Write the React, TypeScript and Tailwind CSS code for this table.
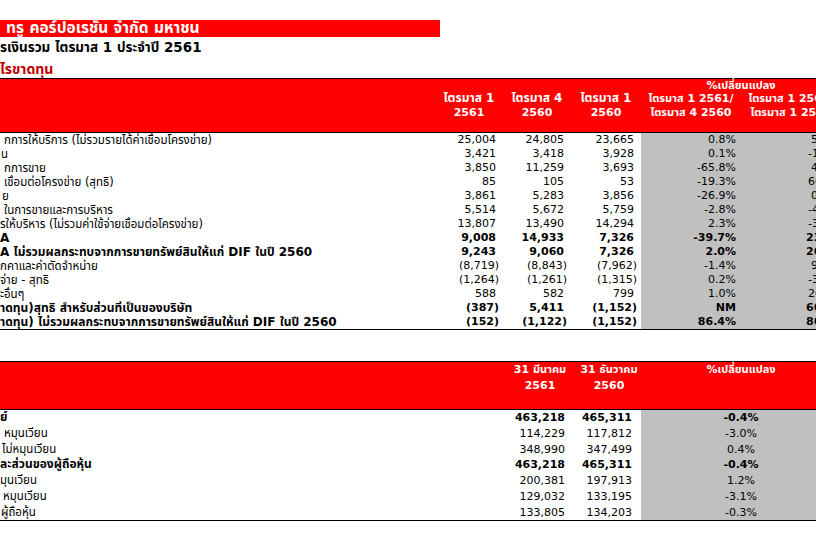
import React from "react";

type Row = {
  label: string;
  pl?: number;
  bold?: boolean;
  v: string[];
  p: string;
  q: string;
  qpl: number;
};

const incomeRows: Row[] = [
  { label: "กการให้บริการ (ไม่รวมรายได้ค่าเชื่อมโครงข่าย)", pl: 4, v: ["25,004", "24,805", "23,665"], p: "0.8%", q: "5.7%", qpl: 70 },
  { label: "น", pl: 1, v: ["3,421", "3,418", "3,928"], p: "0.1%", q: "-12.9%", qpl: 67 },
  { label: "กการขาย", pl: 4, v: ["3,850", "11,259", "3,693"], p: "-65.8%", q: "4.2%", qpl: 70 },
  { label: "เชื่อมต่อโครงข่าย (สุทธิ)", pl: 4, v: ["85", "105", "53"], p: "-19.3%", q: "60.4%", qpl: 67 },
  { label: "ย", pl: 2, v: ["3,861", "5,283", "3,856"], p: "-26.9%", q: "0.1%", qpl: 70 },
  { label: "ในการขายและการบริหาร", pl: 4, v: ["5,514", "5,672", "5,759"], p: "-2.8%", q: "-4.3%", qpl: 67 },
  { label: "รให้บริหาร (ไม่รวมค่าใช้จ่ายเชื่อมต่อโครงข่าย)", v: ["13,807", "13,490", "14,294"], p: "2.3%", q: "-3.4%", qpl: 67 },
  { label: "A", bold: true, v: ["9,008", "14,933", "7,326"], p: "-39.7%", q: "23.0%", qpl: 65 },
  { label: "A ไม่รวมผลกระทบจากการขายทรัพย์สินให้แก่ DIF ในปี 2560", bold: true, v: ["9,243", "9,060", "7,326"], p: "2.0%", q: "26.2%", qpl: 65 },
  { label: "กคาและค่าตัดจำหน่าย", v: ["(8,719)", "(8,843)", "(7,962)"], p: "-1.4%", q: "9.5%", qpl: 70 },
  { label: "จ่าย - สุทธิ", v: ["(1,264)", "(1,261)", "(1,315)"], p: "0.2%", q: "-3.9%", qpl: 67 },
  { label: "ะอื่นๆ", v: ["588", "582", "799"], p: "1.0%", q: "26.4%", qpl: 67 },
  { label: "าดทุน)สุทธิ สำหรับส่วนที่เป็นของบริษัท", bold: true, v: ["(387)", "5,411", "(1,152)"], p: "NM", q: "66.4%", qpl: 65 },
  { label: "าดทุน) ไม่รวมผลกระทบจากการขายทรัพย์สินให้แก่ DIF ในปี 2560", bold: true, v: ["(152)", "(1,122)", "(1,152)"], p: "86.4%", q: "86.8%", qpl: 65 },
];

const balanceRows = [
  { label: "ย์", pl: 0, bold: true, v: ["463,218", "465,311"], p: "-0.4%" },
  { label: "หมุนเวียน", pl: 4, v: ["114,229", "117,812"], p: "-3.0%" },
  { label: "ไม่หมุนเวียน", pl: 2, v: ["348,990", "347,499"], p: "0.4%" },
  { label: "ละส่วนของผู้ถือหุ้น", pl: 0, bold: true, v: ["463,218", "465,311"], p: "-0.4%" },
  { label: "มุนเวียน", pl: 0, v: ["200,381", "197,913"], p: "1.2%" },
  { label: "หมุนเวียน", pl: 3, v: ["129,032", "133,195"], p: "-3.1%" },
  { label: "ผู้ถือหุ้น", pl: 1, v: ["133,805", "134,203"], p: "-0.3%" },
];

function Num({ value }: { value: string }) {
  const paren = value.startsWith("(");
  return <div className={paren ? "text-right pr-[4px]" : "text-right pr-[7px]"}>{value}</div>;
}

export default function App() {
  return (
    <div className="w-[816px] h-[544px] overflow-hidden bg-white text-black text-[11px] [font-family:Tahoma,'DejaVu_Sans','Noto_Sans_Thai',sans-serif]">
      <div className="w-[1000px] pt-[20px]">
        <div className="w-[440px] h-[17px] bg-[#ff0000] text-white font-bold text-[15.5px] leading-[17px] pl-[6px] whitespace-nowrap">
          ทรู คอร์ปอเรชั่น จำกัด มหาชน
        </div>
        <div className="h-[19px] pt-[2px] font-bold text-[13.5px] leading-[17px] whitespace-nowrap">
          รเงินรวม ไตรมาส 1 ประจำปี 2561
        </div>
        <div className="h-[22px] pt-[5px] font-bold text-[14px] leading-[16px] text-[#c00000] whitespace-nowrap">
          ไรขาดทุน
        </div>

        {/* income statement */}
        <div className="border-t border-b border-black bg-[#ff0000] text-white font-bold h-[55px]">
          <div className="grid grid-cols-[435px_68px_68px_70px_100px_100px] h-[13px] leading-[13px]">
            <div className="col-start-5 col-span-2 text-center">%เปลี่ยนแปลง</div>
          </div>
          <div className="grid grid-cols-[435px_68px_68px_70px_100px_100px] leading-[13.5px] text-center">
            <div />
            <div className="text-[12px]">ไตรมาส 1<br /><span className="text-[11px]">2561</span></div>
            <div className="text-[12px]">ไตรมาส 4<br /><span className="text-[11px]">2560</span></div>
            <div className="text-[12px]">ไตรมาส 1<br /><span className="text-[11px]">2560</span></div>
            <div>ไตรมาส 1 2561/<br />ไตรมาส 4 2560</div>
            <div>ไตรมาส 1 2561/<br />ไตรมาส 1 2560</div>
          </div>
        </div>
        <div className="border-b border-black">
          {incomeRows.map((r) => (
            <div
              key={r.label}
              className={`grid grid-cols-[435px_68px_68px_70px_100px_100px] h-[14px] leading-[14px] ${r.bold ? "font-bold" : ""}`}
            >
              <div
                className={`whitespace-nowrap overflow-hidden ${r.bold ? "text-[12px]" : "text-[11.5px]"}`}
                style={{ paddingLeft: r.pl ?? 0 }}
              >
                {r.label}
              </div>
              {r.v.map((x, i) => (
                <Num key={i} value={x} />
              ))}
              <div className="bg-[#c0c0c0] text-right pr-[5px]">{r.p}</div>
              <div className="bg-[#c0c0c0] whitespace-nowrap" style={{ paddingLeft: r.qpl }}>{r.q}</div>
            </div>
          ))}
        </div>

        {/* balance sheet */}
        <div className="mt-[31px] border-t border-b border-black bg-[#ff0000] text-white font-bold h-[49px]">
          <div className="grid grid-cols-[503px_68px_70px_200px] leading-[16px] text-center">
            <div />
            <div className="pl-[6px]">31 มีนาคม<br />2561</div>
            <div className="pl-[6px]">31 ธันวาคม<br />2560</div>
            <div>%เปลี่ยนแปลง</div>
          </div>
        </div>
        <div className="border-b border-black">
          {balanceRows.map((r, idx) => (
            <div
              key={idx}
              className={`grid grid-cols-[503px_68px_70px_200px] h-[15.75px] leading-[15.75px] ${r.bold ? "font-bold" : ""}`}
            >
              <div
                className={`whitespace-nowrap ${r.bold ? "text-[12px]" : "text-[11.5px]"}`}
                style={{ paddingLeft: r.pl }}
              >
                {r.label}
              </div>
              <div className="text-right pr-[6px]">{r.v[0]}</div>
              <div className="text-right pr-[9px]">{r.v[1]}</div>
              <div className="bg-[#c0c0c0] text-center">{r.p}</div>
            </div>
          ))}
        </div>
      </div>
    </div>
  );
}
